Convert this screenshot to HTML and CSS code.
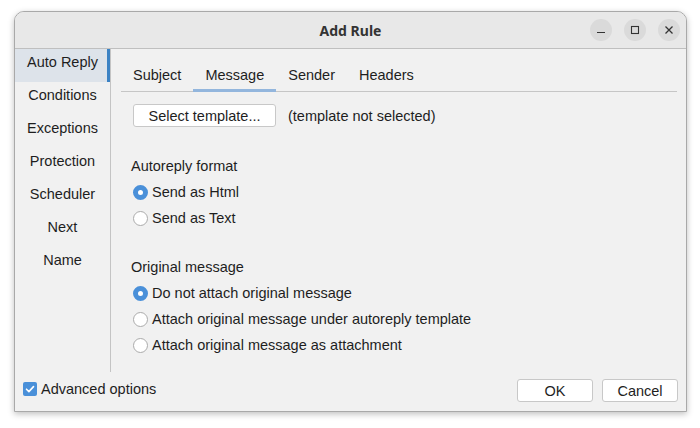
FILE: index.html
```html
<!DOCTYPE html>
<html>
<head>
<meta charset="utf-8">
<link rel="stylesheet" href="styles.css">
</head>
<body>
<div class="window">
  <div class="titlebar">
    <div class="title">Add Rule</div>
    <div class="wm-buttons">
      <span class="wm-btn"><svg width="10" height="10" viewBox="0 0 10 10"><path d="M1 7.5h8" stroke="#333" stroke-width="1.2"/></svg></span>
      <span class="wm-btn"><svg width="10" height="10" viewBox="0 0 10 10"><rect x="1.5" y="1.5" width="7" height="7" fill="none" stroke="#333" stroke-width="1.1"/></svg></span>
      <span class="wm-btn"><svg width="10" height="10" viewBox="0 0 10 10"><path d="M1.5 1.5l7 7M8.5 1.5l-7 7" stroke="#333" stroke-width="1.3"/></svg></span>
    </div>
  </div>
  <div class="main">
    <div class="sidebar">
      <div class="side-item active">Auto Reply</div>
      <div class="side-item">Conditions</div>
      <div class="side-item">Exceptions</div>
      <div class="side-item">Protection</div>
      <div class="side-item">Scheduler</div>
      <div class="side-item">Next</div>
      <div class="side-item">Name</div>
    </div>
    <div class="content">
      <div class="tabs">
        <div class="tab">Subject</div>
        <div class="tab active">Message</div>
        <div class="tab">Sender</div>
        <div class="tab">Headers</div>
      </div>
      <div class="template-row">
        <button class="btn template-btn">Select template...</button>
        <span class="template-state">(template not selected)</span>
      </div>
      <div class="group">
        <div class="group-label">Autoreply format</div>
        <div class="radio-row"><span class="radio checked"></span>Send as Html</div>
        <div class="radio-row"><span class="radio"></span>Send as Text</div>
      </div>
      <div class="group second">
        <div class="group-label">Original message</div>
        <div class="radio-row"><span class="radio checked"></span>Do not attach original message</div>
        <div class="radio-row"><span class="radio"></span>Attach original message under autoreply template</div>
        <div class="radio-row"><span class="radio"></span>Attach original message as attachment</div>
      </div>
    </div>
  </div>
  <div class="footer">
    <label class="check-row"><span class="checkbox"><svg width="14" height="14" viewBox="0 0 14 14"><path d="M3.5 7.2l2.4 2.4 4.6-5" fill="none" stroke="#fff" stroke-width="1.6" stroke-linecap="round" stroke-linejoin="round"/></svg></span>Advanced options</label>
    <div class="actions">
      <button class="btn action-btn">OK</button>
      <button class="btn action-btn">Cancel</button>
    </div>
  </div>
</div>
</body>
</html>
```

FILE: styles.css
```css
* { box-sizing: border-box; }
html, body {
  margin: 0;
  padding: 0;
  background: #ffffff;
  width: 700px;
  height: 428px;
  overflow: hidden;
}
body {
  padding: 11px 0 0 14px;
  font-family: "Liberation Sans", Arial, sans-serif;
  font-size: 14.5px;
  color: #1e1e1e;
}
.window {
  width: 673px;
  height: 401px;
  background: #f1f1f1;
  border: 1px solid #a9a9a9;
  border-radius: 10px 10px 0 0;
  box-shadow: 0 2px 6px rgba(0,0,0,0.25);
  display: flex;
  flex-direction: column;
  overflow: hidden;
}
.titlebar {
  height: 37px;
  flex: none;
  background: #e8e8e8;
  border-bottom: 1px solid #bfbfbf;
  display: flex;
  align-items: center;
  justify-content: center;
  position: relative;
}
.title {
  font-family: "Noto Sans", "Open Sans", sans-serif;
  font-weight: bold;
  font-size: 14px;
  color: #333;
}
.wm-buttons {
  position: absolute;
  right: 6px;
  top: 7px;
  display: flex;
  gap: 12px;
}
.wm-btn {
  width: 22px;
  height: 22px;
  border-radius: 50%;
  background: #dadada;
  display: flex;
  align-items: center;
  justify-content: center;
}
.main {
  flex: none;
  height: 323px;
  display: flex;
}
.sidebar {
  width: 96px;
  flex: none;
  border-right: 1px solid #c4c4c4;
  display: flex;
  flex-direction: column;
}
.side-item {
  height: 33px;
  line-height: 27px;
  padding-bottom: 6px;
  text-align: center;
}
.side-item.active {
  background: #dde3ea;
  box-shadow: inset -3px 0 0 #3b82c4;
}
.content {
  flex: 1;
  padding: 11px 9px 0 10px;
}
.tabs {
  display: flex;
  height: 32px;
  border-bottom: 1px solid #c6c6c6;
}
.tab {
  padding: 0 12px;
  line-height: 30px;
  height: 32px;
}
.tab.active {
  border-bottom: 3px solid #93b6dd;
  margin-bottom: -1px;
}
.template-row {
  display: flex;
  align-items: center;
  margin-top: 12px;
  padding-left: 12px;
  gap: 12px;
}
.btn {
  font-family: "Liberation Sans", Arial, sans-serif;
  font-size: 14.5px;
  color: #1e1e1e;
  background: #ffffff;
  border: 1px solid #c8c8c8;
  border-radius: 3px;
  height: 23px;
  padding: 0;
}
.template-btn { width: 143px; }
.group {
  margin-top: 26px;
  padding-left: 10px;
}
.group.second { margin-top: 23px; }
.group-label {
  height: 26px;
  line-height: 26px;
}
.radio-row {
  height: 26px;
  display: flex;
  align-items: center;
  padding-left: 2px;
}
.radio {
  width: 15px;
  height: 15px;
  border-radius: 50%;
  border: 1px solid #ababab;
  background: #fff;
  margin-right: 4px;
  flex: none;
}
.radio.checked {
  border: 5px solid #4a90d9;
  background: #fff;
}
.footer {
  flex: 1;
  display: flex;
  align-items: center;
  justify-content: space-between;
  padding: 0 8px 0 8px;
}
.check-row {
  display: flex;
  align-items: center;
  gap: 4px;
  margin-top: -5px;
}
.checkbox {
  width: 14px;
  height: 14px;
  background: #4a90d9;
  border-radius: 2px;
  display: flex;
}
.actions {
  display: flex;
  gap: 9px;
  margin-top: -2px;
}
.action-btn { width: 76px; }
```
